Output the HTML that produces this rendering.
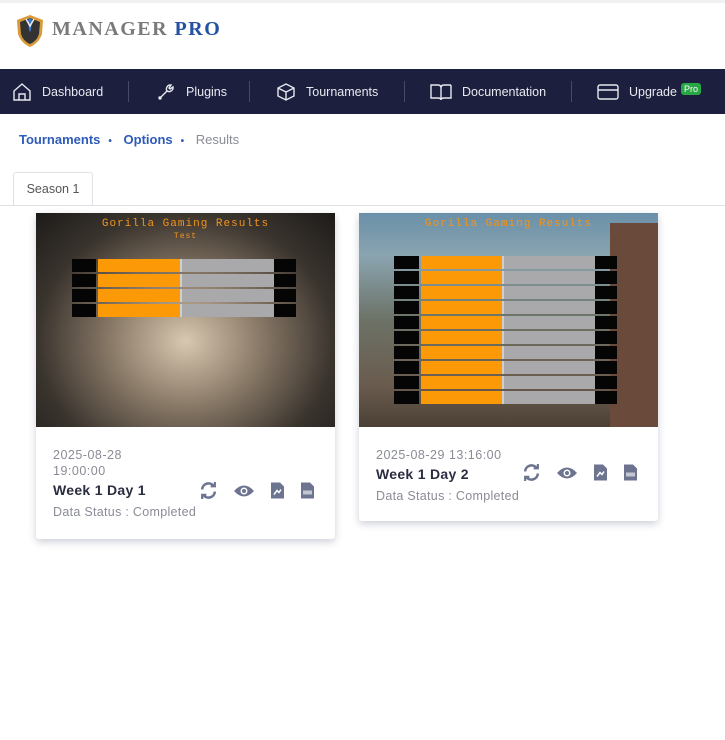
<!DOCTYPE html>
<html><head><meta charset="utf-8"><style>
*{box-sizing:border-box;margin:0;padding:0}
body{width:725px;height:740px;background:#fff;font-family:"Liberation Sans",sans-serif;position:relative;overflow:hidden}
.top{position:absolute;top:0;left:0;width:725px;height:3px;background:#f1f1f3}
.logo{position:absolute;left:15px;top:14px}
.brand{position:absolute;left:52px;top:18px;font-family:"Liberation Serif",serif;font-weight:900;font-size:20px;letter-spacing:1.5px;color:#7a7a7a}
.brand b{color:#2552a0}
.nav{position:absolute;top:69px;left:0;width:725px;height:45px;background:#1c1f3d;color:#e8e9f0;font-size:12.5px}
.ni{position:absolute;top:0;height:45px;display:flex;align-items:center;gap:10px}
.sep{position:absolute;top:12px;width:1px;height:21px;background:#454a6b}
.pro{background:#28a745;color:#fff;font-size:9px;padding:1px 3px;border-radius:3px;margin-left:-6px;margin-top:-6px}
.bc{position:absolute;top:132px;left:19px;font-size:13px;color:#2d5bb9;font-weight:bold}
.bc span{margin-right:8px}
.bc .d{font-size:10px}
.bc .gr{color:#8a8c96;font-weight:normal}
.tab{position:absolute;left:13px;top:172px;width:80px;height:34px;border:1px solid #dee2e6;border-bottom:none;background:#fff;font-size:12.5px;color:#555;text-align:center;line-height:33px;border-radius:3px 3px 0 0}
.tl{position:absolute;left:0;top:205px;width:725px;height:1px;background:#dee2e6}
.card{position:absolute;top:213px;width:299px;background:#fff;box-shadow:0 3px 8px rgba(30,40,80,.22);border-radius:3px}
.img{position:relative;height:214px;overflow:hidden}
.t{position:absolute;width:100%;text-align:center;top:5px;color:#f3941b;font-family:"Liberation Mono",monospace;font-size:11px;letter-spacing:1px}
.row{position:absolute;height:13px;display:flex}
.r{background:#050505}.n{background:#fb9a06}.g{background:#a9a9ab;border-left:2px solid #cfcfcf}
.body{padding:20px 17px 0 17px;font-size:12.5px;color:#8a8c96;position:relative}
.dt{letter-spacing:.5px;line-height:16px}
.wk{font-weight:bold;color:#2a2d40;font-size:14px;letter-spacing:.3px;margin-top:3px}
.ds{margin-top:7px;letter-spacing:.3px}
.ic{position:absolute;display:flex;gap:17px;align-items:center}
</style></head><body>
<div class="top"></div>
<svg class="logo" width="30" height="34" viewBox="0 0 30 34"><path d="M15 1 L28 6 L27 20 Q24 29 15 33 Q6 29 3 20 L2 6 Z" fill="#d99b3a"/><path d="M15 4 L25 8 L24 20 Q22 27 15 30 Q8 27 6 20 L5 8 Z" fill="#333"/><path d="M13 6 L15 4 L17 6 L16 16 L15 18 L14 16 Z" fill="#3a78d0"/><path d="M11 5 L15 12 L19 5" stroke="#eee" stroke-width="1.5" fill="none"/></svg>
<div class="brand">MANAGER <b>PRO</b></div>
<div class="nav">
<div class="ni" style="left:12px"><svg width="20" height="20" viewBox="0 0 20 20" fill="none" stroke="#e8e9f0" stroke-width="1.4"><path d="M2 9 L10 2 L18 9 V18 H2 Z"/><path d="M7 18 V12 H13 V18"/></svg>Dashboard</div>
<div class="sep" style="left:128px"></div>
<div class="ni" style="left:156px"><svg width="20" height="20" viewBox="0 0 20 20" fill="none" stroke="#e8e9f0" stroke-width="1.4"><path d="M3 17 L11 9 A4 4 0 0 1 15 3 L13 6 L14 7 L17 5 A4 4 0 0 1 11 9"/><circle cx="4" cy="16" r="1" /></svg>Plugins</div>
<div class="sep" style="left:249px"></div>
<div class="ni" style="left:276px"><svg width="20" height="20" viewBox="0 0 20 20" fill="none" stroke="#e8e9f0" stroke-width="1.4"><path d="M10 2 L18 6 V14 L10 18 L2 14 V6 Z M2 6 L10 10 L18 6 M10 10 V18"/></svg>Tournaments</div>
<div class="sep" style="left:404px"></div>
<div class="ni" style="left:430px"><svg width="22" height="20" viewBox="0 0 22 20" fill="none" stroke="#e8e9f0" stroke-width="1.4"><path d="M1 3 H8 Q11 3 11 6 V18 Q11 16 8 16 H1 Z M21 3 H14 Q11 3 11 6 M21 3 V16 H14 Q11 16 11 18"/></svg>Documentation</div>
<div class="sep" style="left:571px"></div>
<div class="ni" style="left:597px"><svg width="22" height="18" viewBox="0 0 22 18" fill="none" stroke="#e8e9f0" stroke-width="1.4"><rect x="1" y="2" width="20" height="14" rx="2"/><path d="M1 7 H21"/></svg>Upgrade <span class="pro">Pro</span></div>
</div>
<div class="bc"><span>Tournaments</span><span class="d">•</span> <span>Options</span><span class="d">•</span> <span class="gr">Results</span></div>
<div class="tab">Season 1</div>
<div class="tl"></div>

<div class="card" style="left:36px;height:326px">
<div class="img" style="background:radial-gradient(ellipse at 50% 60%,#d8c8b0 0%,#8a7a68 35%,#3a342e 70%,#1c1a18 100%)">
<div class="t">Gorilla Gaming Results<br><span style="font-size:8px">Test</span></div>
<div class="row" style="top:46px;left:36px"><div class="r" style="width:24px"></div><div class="n" style="width:82px;margin-left:2px"></div><div class="g" style="width:94px"></div><div class="r" style="width:22px"></div></div>
<div class="row" style="top:61px;left:36px"><div class="r" style="width:24px"></div><div class="n" style="width:82px;margin-left:2px"></div><div class="g" style="width:94px"></div><div class="r" style="width:22px"></div></div>
<div class="row" style="top:76px;left:36px"><div class="r" style="width:24px"></div><div class="n" style="width:82px;margin-left:2px"></div><div class="g" style="width:94px"></div><div class="r" style="width:22px"></div></div>
<div class="row" style="top:91px;left:36px"><div class="r" style="width:24px"></div><div class="n" style="width:82px;margin-left:2px"></div><div class="g" style="width:94px"></div><div class="r" style="width:22px"></div></div>
</div>
<div class="body"><div class="dt">2025-08-28<br>19:00:00</div><div class="wk">Week 1 Day 1</div><div class="ds">Data Status : Completed</div>
<div class="ic" style="left:164px;top:55px">
<svg width="17" height="17" viewBox="0 0 16 16" fill="none" stroke="#6c7490" stroke-width="2.4"><path d="M2 7 A6 6 0 0 1 13 4 M14 9 A6 6 0 0 1 3 12"/><path d="M10 4 H14 V0 M6 12 H2 V16" stroke-width="2"/></svg>
<svg width="20" height="14" viewBox="0 0 20 14"><path d="M0 7 Q10 -4 20 7 Q10 18 0 7Z" fill="#6c7490"/><circle cx="10" cy="7" r="3.5" fill="#fff"/><circle cx="10" cy="7" r="2" fill="#6c7490"/></svg>
<svg width="13" height="17" viewBox="0 0 13 16"><path d="M0 0 H9 L13 4 V16 H0Z" fill="#6c7490"/><path d="M3 12 L6 8 L8 10 L10 7" stroke="#fff" fill="none" stroke-width="1.5"/></svg>
<svg width="13" height="17" viewBox="0 0 13 16"><path d="M0 0 H9 L13 4 V16 H0Z" fill="#6c7490"/><rect x="2" y="8" width="9" height="4" fill="#fff" opacity=".6"/></svg>
</div></div>
</div>

<div class="card" style="left:359px;height:308px">
<div class="img" style="background:linear-gradient(180deg,#6a90a8 0%,#8aa4b0 20%,#6c7266 50%,#6a5c4e 80%,#4c4036 100%)">
<div style="position:absolute;right:0;top:10px;width:48px;height:204px;background:#6a4a3a"></div>
<div class="t">Gorilla Gaming Results</div>
<div class="row" style="top:43px;left:35px"><div class="r" style="width:25px"></div><div class="n" style="width:81px;margin-left:2px"></div><div class="g" style="width:93px"></div><div class="r" style="width:22px"></div></div>
<div class="row" style="top:58px;left:35px"><div class="r" style="width:25px"></div><div class="n" style="width:81px;margin-left:2px"></div><div class="g" style="width:93px"></div><div class="r" style="width:22px"></div></div>
<div class="row" style="top:73px;left:35px"><div class="r" style="width:25px"></div><div class="n" style="width:81px;margin-left:2px"></div><div class="g" style="width:93px"></div><div class="r" style="width:22px"></div></div>
<div class="row" style="top:88px;left:35px"><div class="r" style="width:25px"></div><div class="n" style="width:81px;margin-left:2px"></div><div class="g" style="width:93px"></div><div class="r" style="width:22px"></div></div>
<div class="row" style="top:103px;left:35px"><div class="r" style="width:25px"></div><div class="n" style="width:81px;margin-left:2px"></div><div class="g" style="width:93px"></div><div class="r" style="width:22px"></div></div>
<div class="row" style="top:118px;left:35px"><div class="r" style="width:25px"></div><div class="n" style="width:81px;margin-left:2px"></div><div class="g" style="width:93px"></div><div class="r" style="width:22px"></div></div>
<div class="row" style="top:133px;left:35px"><div class="r" style="width:25px"></div><div class="n" style="width:81px;margin-left:2px"></div><div class="g" style="width:93px"></div><div class="r" style="width:22px"></div></div>
<div class="row" style="top:148px;left:35px"><div class="r" style="width:25px"></div><div class="n" style="width:81px;margin-left:2px"></div><div class="g" style="width:93px"></div><div class="r" style="width:22px"></div></div>
<div class="row" style="top:163px;left:35px"><div class="r" style="width:25px"></div><div class="n" style="width:81px;margin-left:2px"></div><div class="g" style="width:93px"></div><div class="r" style="width:22px"></div></div>
<div class="row" style="top:178px;left:35px"><div class="r" style="width:25px"></div><div class="n" style="width:81px;margin-left:2px"></div><div class="g" style="width:93px"></div><div class="r" style="width:22px"></div></div>
</div>
<div class="body"><div class="dt">2025-08-29 13:16:00</div><div class="wk">Week 1 Day 2</div><div class="ds">Data Status : Completed</div>
<div class="ic" style="left:164px;top:37px">
<svg width="17" height="17" viewBox="0 0 16 16" fill="none" stroke="#6c7490" stroke-width="2.4"><path d="M2 7 A6 6 0 0 1 13 4 M14 9 A6 6 0 0 1 3 12"/><path d="M10 4 H14 V0 M6 12 H2 V16" stroke-width="2"/></svg>
<svg width="20" height="14" viewBox="0 0 20 14"><path d="M0 7 Q10 -4 20 7 Q10 18 0 7Z" fill="#6c7490"/><circle cx="10" cy="7" r="3.5" fill="#fff"/><circle cx="10" cy="7" r="2" fill="#6c7490"/></svg>
<svg width="13" height="17" viewBox="0 0 13 16"><path d="M0 0 H9 L13 4 V16 H0Z" fill="#6c7490"/><path d="M3 12 L6 8 L8 10 L10 7" stroke="#fff" fill="none" stroke-width="1.5"/></svg>
<svg width="13" height="17" viewBox="0 0 13 16"><path d="M0 0 H9 L13 4 V16 H0Z" fill="#6c7490"/><rect x="2" y="8" width="9" height="4" fill="#fff" opacity=".6"/></svg>
</div></div>
</div>
</body></html>
